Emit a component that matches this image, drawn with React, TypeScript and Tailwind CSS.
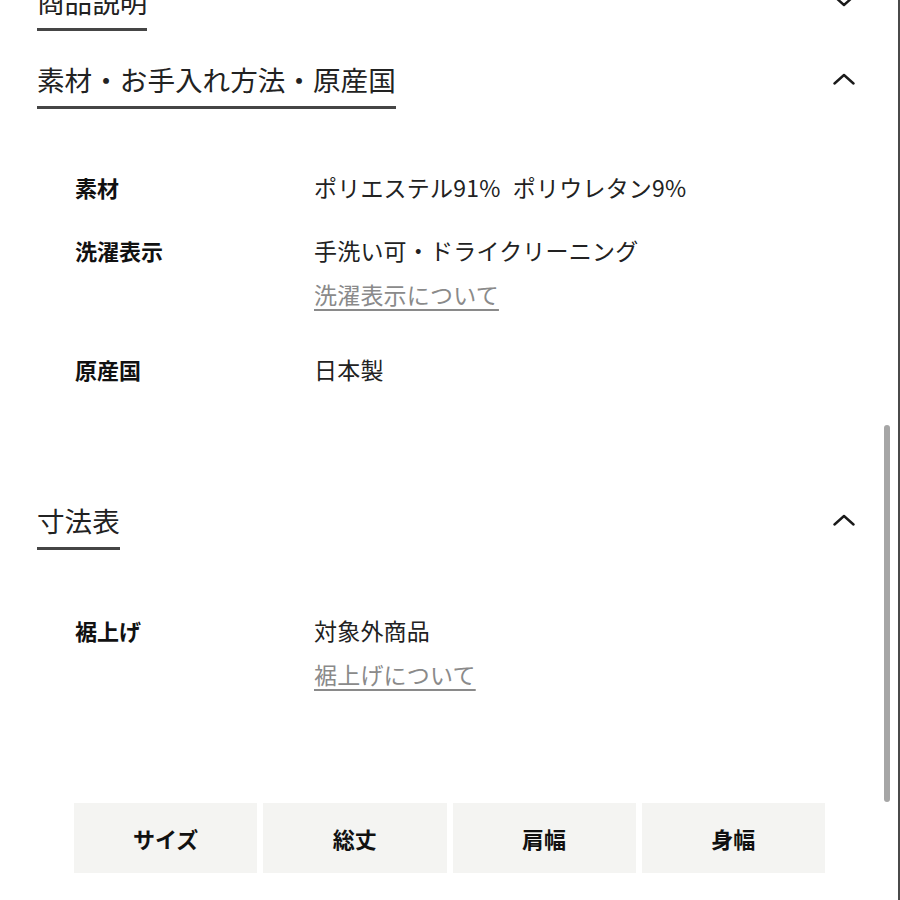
import React from "react";

const font = { fontFamily: '"Noto Sans CJK JP", "Noto Sans", sans-serif' };

function Chevron({ up }: { up: boolean }) {
  return (
    <div className="h-[40px] flex items-center">
      <svg width="22" height="12" viewBox="0 0 22 12" fill="none">
        <polyline
          points={up ? "1.5,10.5 11,2 20.5,10.5" : "1.5,1.5 11,10 20.5,1.5"}
          stroke="#1a1a1a"
          strokeWidth="2.4"
          strokeLinecap="round"
          strokeLinejoin="round"
        />
      </svg>
    </div>
  );
}

function SectionHeader({ title, up, className = "" }: { title: string; up: boolean; className?: string }) {
  return (
    <div className={`flex items-start justify-between ${className}`}>
      <span className="inline-block text-[27.6px] leading-[40px] text-[#222] pb-[7px] border-b-[3px] border-[#454545]">
        {title}
      </span>
      <Chevron up={up} />
    </div>
  );
}

function Row({
  label,
  value,
  link,
  className = "",
}: {
  label: string;
  value: string;
  link?: string;
  className?: string;
}) {
  return (
    <div className={`flex pl-[38px] leading-[44px] ${className}`}>
      <div className="w-[239px] shrink-0 text-[22px] font-bold text-[#111]">{label}</div>
      <div className="flex flex-col text-[23px] text-[#222] tracking-[0.2px] [word-spacing:7px]">
        <span>{value}</span>
        {link && (
          <a className="text-[#8a8a8a] underline decoration-[#8a8a8a] underline-offset-[5px] decoration-[1.5px]">
            {link}
          </a>
        )}
      </div>
    </div>
  );
}

export default function App() {
  const cols = ["サイズ", "総丈", "肩幅", "身幅"];
  return (
    <div
      style={font}
      className="relative w-[900px] h-[900px] overflow-hidden bg-white border-r-2 border-[#4a4a4a]"
    >
      <div className="flex flex-col pl-[37px] pr-[43px] mt-[-19px]">
        <SectionHeader title="商品説明" up={false} />
        <SectionHeader title="素材・お手入れ方法・原産国" up className="mt-[28px]" />

        <div className="pt-[56px]">
          <Row label="素材" value="ポリエステル91% ポリウレタン9%" />
          <Row
            label="洗濯表示"
            value="手洗い可・ドライクリーニング"
            link="洗濯表示について"
            className="mt-[19px]"
          />
          <Row label="原産国" value="日本製" className="mt-[31px]" />
        </div>

        <SectionHeader title="寸法表" up className="mt-[109px]" />

        <div className="pt-[58px]">
          <Row label="裾上げ" value="対象外商品" link="裾上げについて" />
        </div>

        <div className="mt-[107px] ml-[37px] w-[751px] grid grid-cols-4 gap-[6px]">
          {cols.map((c) => (
            <div
              key={c}
              className="h-[70px] bg-[#f4f4f2] flex items-center justify-center text-[22px] font-bold text-[#111]"
            >
              {c}
            </div>
          ))}
        </div>
      </div>

      <div className="absolute right-[8px] top-[425px] w-[6px] h-[377px] rounded-full bg-[#a6a6a6]" />
    </div>
  );
}
